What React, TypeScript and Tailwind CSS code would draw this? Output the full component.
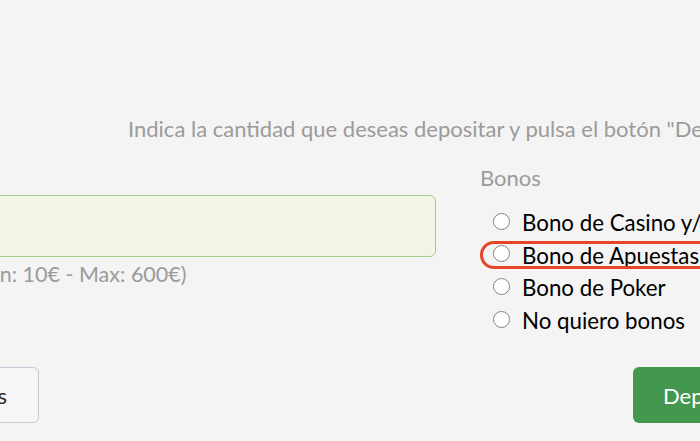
import { useState } from "react";

const bonos = [
  "Bono de Casino y/o Slots",
  "Bono de Apuestas",
  "Bono de Poker",
  "No quiero bonos",
];

export default function App() {
  const [selected, setSelected] = useState<string | null>(null);

  return (
    <div className="h-[441px] w-[700px] overflow-hidden bg-[#f4f4f4] font-['Lato','Liberation_Sans',sans-serif]">
      <p className="whitespace-nowrap pl-[128px] pt-[116px] text-[22px] leading-[26px] text-[#9b9b9b]">
        Indica la cantidad que deseas depositar y pulsa el botón "Depositar"
      </p>

      <div className="mt-[23px] flex">
        {/* importe */}
        <div className="ml-[-31px] w-[467px] shrink-0">
          <input
            type="text"
            className="mt-[30px] block h-[62px] w-full rounded-[6px] border-[1.5px] border-[#a9cc8b] bg-[#f1f4e6] px-3 text-[22px] outline-none"
          />
          <p className="mt-[4px] whitespace-nowrap text-[21.5px] leading-[26px] text-[#9b9b9b]">
            (Min: 10€ - Max: 600€)
          </p>
        </div>

        {/* bonos */}
        <div className="ml-[44px] shrink-0">
          <p className="text-[22px] leading-[26px] text-[#9b9b9b]">Bonos</p>
          <ul className="mt-[16px]">
            {bonos.map((b, i) => (
              <li key={b} className="relative h-[32.6px]">
                {i === 1 && (
                  <span className="pointer-events-none absolute left-0 top-[1px] h-[28px] w-[280px] rounded-full border-[3px] border-[#e6452c]" />
                )}
                <label className="flex h-[32.6px] cursor-pointer items-center whitespace-nowrap pl-[13px]">
                  <input
                    type="radio"
                    name="bono"
                    checked={selected === b}
                    onChange={() => setSelected(b)}
                    className="sr-only"
                  />
                  <span className="mt-[-4px] h-[17px] w-[17px] shrink-0 rounded-full border border-[#858585] bg-white" />
                  <span className="ml-[12px] text-[22.3px] leading-[32px] text-black">{b}</span>
                </label>
              </li>
            ))}
          </ul>
        </div>
      </div>

      <div className="mt-[30px] flex">
        <div className="flex w-[39px] shrink-0 justify-end">
          <button className="h-[56px] shrink-0 whitespace-nowrap rounded-[6px] border border-[#c4c9d7] bg-[#f6f6f6] px-[31px] text-[22px] text-[#2d2d2d]">
            Atrás
          </button>
        </div>
        <div className="ml-auto w-[67px] shrink-0">
          <button className="h-[56px] shrink-0 whitespace-nowrap rounded-[6px] bg-[#43974f] px-[30px] text-[22px] text-white">
            Depositar
          </button>
        </div>
      </div>
    </div>
  );
}
